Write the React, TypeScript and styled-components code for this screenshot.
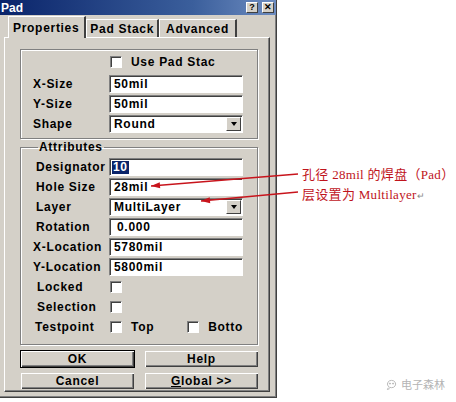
import styled, { createGlobalStyle } from "styled-components";

const GlobalStyle = createGlobalStyle`
  body {
    margin: 0;
    background: #fff;
  }
`;

const ui = `
  font-family: "Liberation Sans", Arial, sans-serif;
  font-weight: bold;
  font-size: 12px;
  letter-spacing: 0.7px;
  color: #000;
`;

type Arrow = { x1: number; y1: number; x2: number; y2: number };

const arrows: Arrow[] = [
  { x1: 298, y1: 174, x2: 151, y2: 186 },
  { x1: 298, y1: 192, x2: 201, y2: 201 },
];

const headPoints = ({ x1, y1, x2, y2 }: Arrow) => {
  const len = Math.hypot(x2 - x1, y2 - y1);
  const dx = (x2 - x1) / len;
  const dy = (y2 - y1) / len;
  const bx = x2 - dx * 9;
  const by = y2 - dy * 9;
  const px = -dy * 3;
  const py = dx * 3;
  return `${x2},${y2} ${bx + px},${by + py} ${bx - px},${by - py}`;
};

export default function App() {
  return (
    <Page>
      <GlobalStyle />
      <Dialog>
        <TitleBar>
          <Title>Pad</Title>
          <CaptionButtons>
            <CaptionButton>?</CaptionButton>
            <CaptionButton>✕</CaptionButton>
          </CaptionButtons>
        </TitleBar>
        <TabStrip>
          <Tab $active>Properties</Tab>
          <Tab>Pad Stack</Tab>
          <Tab $extra={3}>Advanced</Tab>
        </TabStrip>
        <Panel>
          <Group $top={2}>
            <Row>
              <span />
              <CheckLine>
                <Check />
                <span>Use Pad Stac</span>
              </CheckLine>
            </Row>
            <Row $gapTop>
              <Label>X-Size</Label>
              <Field>50mil</Field>
            </Row>
            <Row>
              <Label>Y-Size</Label>
              <Field>50mil</Field>
            </Row>
            <Row>
              <Label>Shape</Label>
              <Field>
                Round
                <DropButton />
              </Field>
            </Row>
          </Group>

          <Group as="fieldset" $top={3} $titled>
            <Legend>Attributes</Legend>
            <Row>
              <Label $shift={3}>Designator</Label>
              <Field>
                <Selected>10</Selected>
              </Field>
            </Row>
            <Row>
              <Label $shift={3}>Hole Size</Label>
              <Field>28mil</Field>
            </Row>
            <Row>
              <Label $shift={3}>Layer</Label>
              <Field>
                MultiLayer
                <DropButton />
              </Field>
            </Row>
            <Row>
              <Label $shift={3}>Rotation</Label>
              <Field $pad={7}>0.000</Field>
            </Row>
            <Row>
              <Label>X-Location</Label>
              <Field>5780mil</Field>
            </Row>
            <Row>
              <Label>Y-Location</Label>
              <Field>5800mil</Field>
            </Row>
            <Row>
              <Label $shift={4}>Locked</Label>
              <CheckLine>
                <Check />
              </CheckLine>
            </Row>
            <Row>
              <Label $shift={4}>Selection</Label>
              <CheckLine>
                <Check />
              </CheckLine>
            </Row>
            <Row>
              <Label $shift={2}>Testpoint</Label>
              <CheckLine>
                <Check />
                <span>Top</span>
                <Spacer />
                <Check />
                <span>Botto</span>
              </CheckLine>
            </Row>
          </Group>

          <ButtonGrid>
            <Button $default>OK</Button>
            <Button>Help</Button>
            <Button>Cancel</Button>
            <Button>
              <u>G</u>lobal &gt;&gt;
            </Button>
          </ButtonGrid>
        </Panel>
      </Dialog>

      <Side>
        <Notes>
          <Note>孔径 28mil 的焊盘（Pad）</Note>
          <Note>
            层设置为 Multilayer<Return>↵</Return>
          </Note>
        </Notes>
        <Watermark>
          <svg width="11" height="11" viewBox="0 0 12 12" fill="none" stroke="#b4b4b4" strokeWidth="1">
            <path d="M6 1.5a4.5 4 0 1 0 0.1 0M2.5 9.5l-1 2 2.5-1" />
            <circle cx="4.3" cy="5" r="0.6" fill="#b4b4b4" />
            <circle cx="7.7" cy="5" r="0.6" fill="#b4b4b4" />
          </svg>
          电子森林
        </Watermark>
      </Side>

      <Overlay width="456" height="402">
        {arrows.map((a, i) => (
          <g key={i}>
            <line x1={a.x1} y1={a.y1} x2={a.x2} y2={a.y2} stroke="#c8141c" strokeWidth="1.3" />
            <polygon points={headPoints(a)} fill="#c8141c" />
          </g>
        ))}
      </Overlay>
    </Page>
  );
}

const Page = styled.div`
  position: relative;
  width: 456px;
  height: 402px;
  display: flex;
  overflow: hidden;
`;

const Dialog = styled.div`
  width: 277px;
  height: 398px;
  flex: none;
  box-sizing: border-box;
  background: #d4d0c8;
  border-right: 1px solid #404040;
  border-bottom: 1px solid #404040;
  box-shadow: inset -1px -1px 0 #808080;
  display: flex;
  flex-direction: column;
`;

const TitleBar = styled.div`
  height: 15px;
  display: flex;
  align-items: center;
  justify-content: space-between;
  padding: 0 2px 0 1px;
  background: linear-gradient(to right, #0a246a, #3b5f9c 70%, #6d8cc0);
`;

const Title = styled.span`
  font-family: "Liberation Sans", Arial, sans-serif;
  font-weight: bold;
  font-size: 12px;
  color: #fff;
`;

const CaptionButtons = styled.div`
  display: flex;
  gap: 4px;
`;

const CaptionButton = styled.div`
  width: 12px;
  height: 11px;
  box-sizing: border-box;
  background: #d4d0c8;
  border-top: 1px solid #fff;
  border-left: 1px solid #fff;
  border-right: 1px solid #404040;
  border-bottom: 1px solid #404040;
  font-family: "Liberation Sans", Arial, sans-serif;
  font-weight: bold;
  font-size: 9px;
  line-height: 9px;
  text-align: center;
  color: #000;
`;

const TabStrip = styled.div`
  display: flex;
  align-items: flex-end;
  height: 22px;
  margin-top: 1px;
  padding-left: 8px;
  position: relative;
  z-index: 1;
  margin-bottom: -1px;
`;

const Tab = styled.div<{ $active?: boolean; $extra?: number }>`
  ${ui}
  height: ${(p) => (p.$active ? 22 : 18)}px;
  box-sizing: border-box;
  display: flex;
  align-items: center;
  padding: 0 ${(p) => (p.$active ? 5 : 3 + (p.$extra ?? 0))}px 0
    ${(p) => (p.$active ? 4 : 3 + (p.$extra ?? 0))}px;
  margin-bottom: ${(p) => (p.$active ? 0 : 1)}px;
  background: #d4d0c8;
  border-top: 1px solid #fff;
  border-left: 1px solid #fff;
  border-right: 2px solid #404040;
`;

const Panel = styled.div`
  margin: 0 6px 5px 4px;
  flex: 1;
  box-sizing: border-box;
  border-top: 1px solid #fff;
  border-left: 1px solid #fff;
  border-right: 1px solid #404040;
  border-bottom: 1px solid #404040;
  box-shadow: inset -1px -1px 0 #808080;
  padding: 11px 9px 0 15px;
  display: flex;
  flex-direction: column;
`;

const Group = styled.div<{ $top: number; $titled?: boolean }>`
  margin: ${(p) => (p.$titled ? "1px" : "0")} 0 0;
  min-width: 0;
  width: 238px;
  box-sizing: border-box;
  border: 1px solid #808080;
  box-shadow: inset 1px 1px 0 #fff, 1px 1px 0 #fff;
  padding: ${(p) => p.$top}px 0 ${(p) => (p.$titled ? 7 : 4)}px 12px;
  display: flex;
  flex-direction: column;
`;

const Legend = styled.legend`
  ${ui}
  padding: 0 1px;
  margin-left: 5px;
  line-height: 14px;
`;

const Row = styled.div<{ $gapTop?: boolean }>`
  display: grid;
  grid-template-columns: 76px 134px;
  align-items: center;
  height: 20px;
  margin-top: ${(p) => (p.$gapTop ? 2 : 0)}px;
`;

const Label = styled.span<{ $shift?: number }>`
  ${ui}
  padding-left: ${(p) => p.$shift ?? 0}px;
  white-space: nowrap;
`;

const Field = styled.div<{ $pad?: number }>`
  ${ui}
  position: relative;
  height: 18px;
  box-sizing: border-box;
  background: #fff;
  border-top: 1px solid #808080;
  border-left: 1px solid #808080;
  border-right: 1px solid #fff;
  border-bottom: 1px solid #fff;
  box-shadow: inset 1px 1px 0 #404040;
  padding-left: ${(p) => p.$pad ?? 4}px;
  display: flex;
  align-items: center;
  white-space: nowrap;
`;

const Selected = styled.span`
  background: #0a246a;
  color: #fff;
  padding: 0 1px;
  margin-left: -2px;
  line-height: 13px;
`;

const DropButton = styled.span`
  position: absolute;
  right: 1px;
  top: 1px;
  width: 15px;
  height: 14px;
  box-sizing: border-box;
  background: #d4d0c8;
  border-top: 1px solid #fff;
  border-left: 1px solid #fff;
  border-right: 1px solid #404040;
  border-bottom: 1px solid #404040;
  display: flex;
  align-items: center;
  justify-content: center;

  &::after {
    content: "";
    border-left: 3.5px solid transparent;
    border-right: 3.5px solid transparent;
    border-top: 4px solid #000;
  }
`;

const CheckLine = styled.div`
  ${ui}
  display: flex;
  align-items: center;
  gap: 9px;
  padding-left: 1px;
`;

const Check = styled.span`
  width: 12px;
  height: 12px;
  box-sizing: border-box;
  background: #fff;
  border-top: 1px solid #808080;
  border-left: 1px solid #808080;
  border-right: 1px solid #fff;
  border-bottom: 1px solid #fff;
  box-shadow: inset 1px 1px 0 #404040;
  flex: none;
`;

const Spacer = styled.span`
  width: 48px;
`;

const ButtonGrid = styled.div`
  display: grid;
  grid-template-columns: 115px 115px;
  column-gap: 9px;
  row-gap: 4px;
  margin-top: 5px;
`;

const Button = styled.div<{ $default?: boolean }>`
  ${ui}
  height: 18px;
  box-sizing: border-box;
  display: flex;
  align-items: center;
  justify-content: center;
  background: #d4d0c8;
  border: 1px solid ${(p) => (p.$default ? "#000" : "transparent")};
  box-shadow: inset 1px 1px 0 #fff, inset -1px -1px 0 #404040,
    inset -2px -2px 0 #808080;
`;

const Side = styled.div`
  flex: 1;
  min-width: 0;
  display: flex;
  flex-direction: column;
  padding-left: 25px;
`;

const Notes = styled.div`
  margin-top: 167px;
  display: flex;
  flex-direction: column;
  gap: 4px;
`;

const Note = styled.div`
  font-family: "Liberation Serif", "Noto Sans CJK SC", serif;
  font-size: 13px;
  letter-spacing: 0.3px;
  line-height: 16px;
  color: #c0141c;
  white-space: nowrap;
`;

const Return = styled.span`
  font-size: 9px;
  color: #888;
`;

const Watermark = styled.div`
  margin-top: auto;
  margin-bottom: 10px;
  margin-left: 84px;
  display: flex;
  align-items: center;
  gap: 4px;
  font-family: "Noto Sans CJK SC", sans-serif;
  font-size: 11px;
  white-space: nowrap;
  color: #b4b4b4;
`;

const Overlay = styled.svg`
  position: absolute;
  left: 0;
  top: 0;
  pointer-events: none;
`;
